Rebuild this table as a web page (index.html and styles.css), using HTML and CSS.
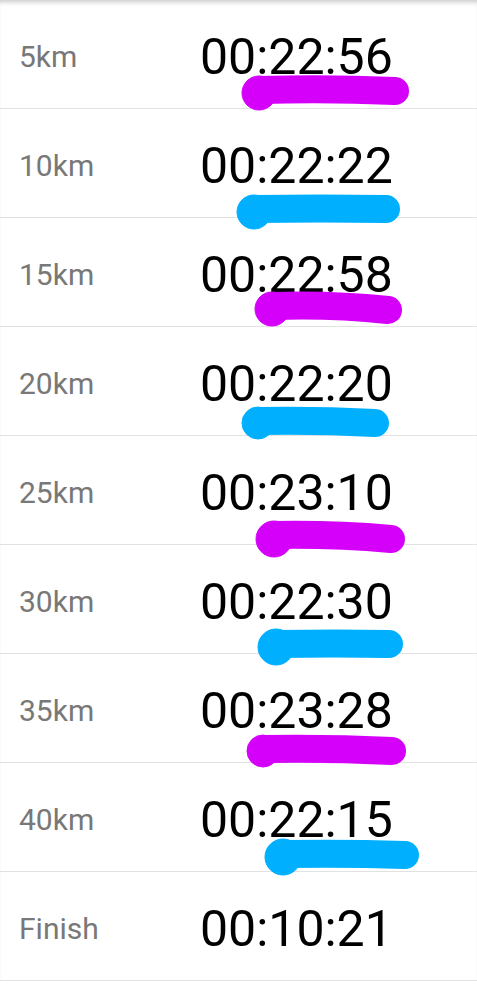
FILE: index.html
```html
<!DOCTYPE html>
<html lang="en">
<head>
    <meta charset="UTF-8">
    <meta name="viewport" content="width=device-width, initial-scale=1.0">
    <title>Splits</title>
    <link rel="stylesheet" href="styles.css">
</head>
<body>
    <div class="splits">
        <div class="split-row"><span class="split-label">5km</span><span class="split-time">00:22:56</span></div>
        <div class="split-row"><span class="split-label">10km</span><span class="split-time">00:22:22</span></div>
        <div class="split-row"><span class="split-label">15km</span><span class="split-time">00:22:58</span></div>
        <div class="split-row"><span class="split-label">20km</span><span class="split-time">00:22:20</span></div>
        <div class="split-row"><span class="split-label">25km</span><span class="split-time">00:23:10</span></div>
        <div class="split-row"><span class="split-label">30km</span><span class="split-time">00:22:30</span></div>
        <div class="split-row"><span class="split-label">35km</span><span class="split-time">00:23:28</span></div>
        <div class="split-row"><span class="split-label">40km</span><span class="split-time">00:22:15</span></div>
        <div class="split-row"><span class="split-label">Finish</span><span class="split-time">00:10:21</span></div>

        <!-- Hand-drawn marker strokes over the times -->
        <svg class="marks" width="477" height="1001" viewBox="0 0 477 1001">
            <g class="mark-purple">
                <circle cx="259" cy="93" r="17"/>
                <path d="M260 90 Q328 88 395 91"/>
                <circle cx="272" cy="309" r="17"/>
                <path d="M273 306 Q330 304 388 310"/>
                <circle cx="274" cy="539" r="18"/>
                <path d="M275 535 Q334 534 391 539"/>
                <circle cx="263" cy="751" r="16"/>
                <path d="M264 749 Q330 748 392 751"/>
            </g>
            <g class="mark-blue">
                <circle cx="254" cy="212" r="17"/>
                <path d="M255 209 Q320 208 386 209"/>
                <circle cx="258" cy="423" r="16"/>
                <path d="M259 421 Q318 420 375 423"/>
                <circle cx="276" cy="647" r="18"/>
                <path d="M278 644 Q334 643 389 644"/>
                <circle cx="283" cy="857" r="18"/>
                <path d="M285 854 Q346 853 405 855"/>
            </g>
        </svg>
    </div>
</body>
</html>
```
FILE: styles.css
```css
body {
    margin: 0;
    padding: 0;
    background-color: #fff;
    font-family: Roboto, "Noto Sans", sans-serif;
}
.splits {
    position: relative;
    display: flex;
    flex-direction: column;
    box-shadow: inset 0 5px 5px -3px rgba(0, 0, 0, 0.22);
}
.split-row {
    display: flex;
    align-items: center;
    box-sizing: border-box;
    height: 109px;
    padding: 5px 0 0 19px;
    border-bottom: 1px solid #e2e2e2;
}
.split-label {
    width: 181px;
    font-size: 30px;
    color: #787878;
}
.split-time {
    font-size: 50px;
    color: #000;
}
.marks {
    position: absolute;
    top: 0;
    left: 0;
    pointer-events: none;
}
.marks path {
    fill: none;
    stroke-width: 28;
    stroke-linecap: round;
}
.mark-purple {
    fill: #d500f9;
    stroke: #d500f9;
}
.mark-blue {
    fill: #00b0ff;
    stroke: #00b0ff;
}
```
